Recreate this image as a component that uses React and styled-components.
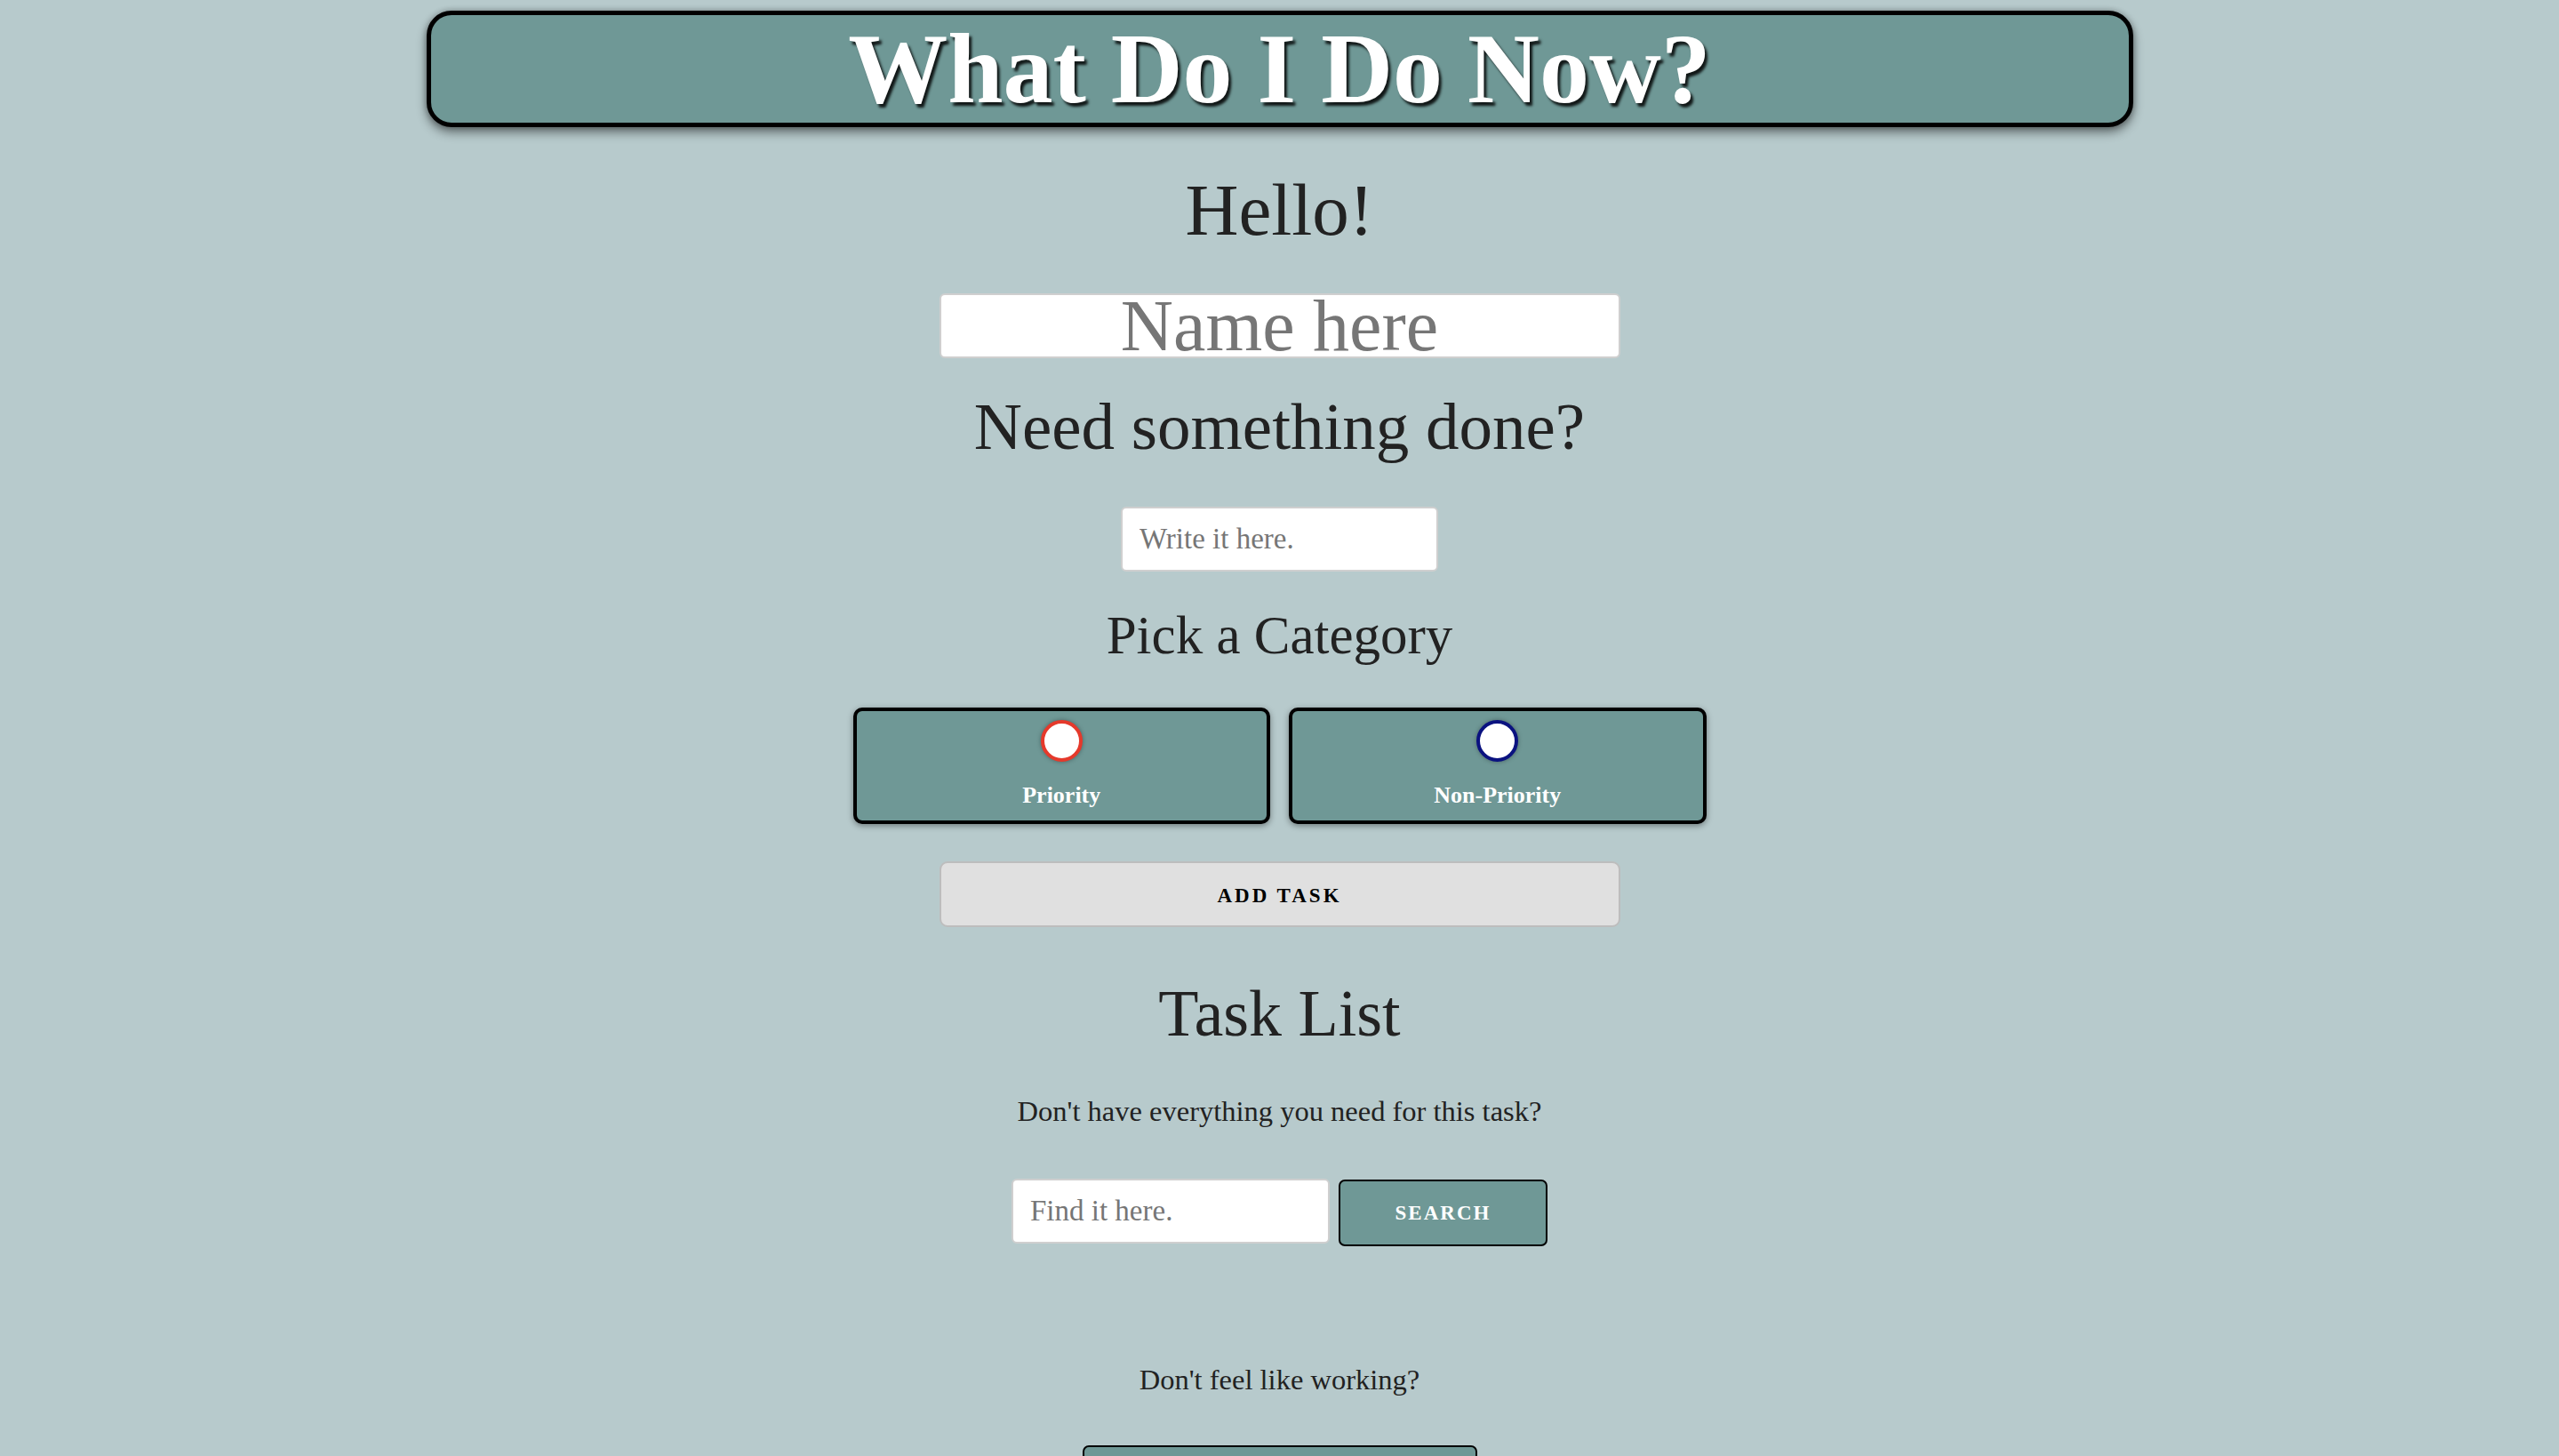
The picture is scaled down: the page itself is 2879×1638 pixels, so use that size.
import React from "react";
import styled, { createGlobalStyle } from "styled-components";

const GlobalStyle = createGlobalStyle`
  html, body {
    margin: 0;
    padding: 0;
    background: #b7cacc;
  }
  body {
    font-family: "Liberation Serif", "Times New Roman", serif;
    color: #222;
  }
  * { box-sizing: border-box; }
`;

const Page = styled.div`
  display: flex;
  flex-direction: column;
  align-items: center;
  min-height: 100vh;
  padding-top: 12px;
  padding-bottom: 40px;
`;

const Banner = styled.header`
  width: 1920px;
  height: 131px;
  background: #6f9896;
  border: 5px solid #000;
  border-radius: 28px;
  box-shadow: 0 6px 12px rgba(0, 0, 0, 0.45), 0 0 6px rgba(0, 0, 0, 0.3);
  display: flex;
  justify-content: center;
  align-items: flex-start;
  padding-top: 4px;
`;

const Title = styled.h1`
  margin: 0;
  font-size: 112px;
  line-height: 1;
  font-weight: 700;
  color: #fff;
  text-shadow: 3px 4px 3px rgba(0, 0, 0, 0.85);
`;

const Heading = styled.h2`
  margin: ${(p) => p.$mt}px 0 0;
  font-size: ${(p) => p.$size}px;
  line-height: 1;
  font-weight: 400;
  color: #222;
  text-align: center;
`;

const Text = styled.p`
  margin: ${(p) => p.$mt}px 0 0;
  font-size: 32.5px;
  line-height: 1;
  color: #222;
  text-align: center;
`;

const TextInput = styled.input`
  margin-top: ${(p) => p.$mt || 0}px;
  width: ${(p) => p.$w}px;
  height: 73px;
  background: #fff;
  border: 2px solid #cfcfcf;
  border-radius: 6px;
  font-family: inherit;
  font-size: ${(p) => p.$fs}px;
  text-align: ${(p) => (p.$center ? "center" : "left")};
  padding: 0 ${(p) => (p.$center ? 0 : 19)}px;
  color: #222;
  outline: none;
  &::placeholder {
    color: #767676;
  }
`;

const CategoryRow = styled.div`
  margin-top: 51px;
  width: 960px;
  display: grid;
  grid-template-columns: 1fr 1fr;
  column-gap: 21px;
`;

const CategoryCard = styled.label`
  height: 131px;
  background: #6f9896;
  border: 4px solid #000;
  border-radius: 10px;
  box-shadow: 0 2px 7px rgba(0, 0, 0, 0.4);
  display: flex;
  flex-direction: column;
  align-items: center;
  padding-top: 10px;
  cursor: pointer;
`;

const Bubble = styled.input.attrs({ type: "radio" })`
  appearance: none;
  margin: 0;
  width: 47px;
  height: 47px;
  border-radius: 50%;
  background: #fff;
  border: 4px solid ${(p) => p.$ring};
  box-shadow: 0 0 5px rgba(0, 0, 0, 0.35);
  cursor: pointer;
`;

const CardLabel = styled.span`
  margin-top: 25px;
  font-size: 26px;
  line-height: 1;
  font-weight: 700;
  color: #fff;
`;

const AddButton = styled.button`
  margin-top: 42px;
  width: 766px;
  height: 74px;
  background: #e0e0e0;
  border: 2px solid #bdbdbd;
  border-radius: 9px;
  font-family: inherit;
  font-size: 23px;
  font-weight: 700;
  letter-spacing: 3px;
  color: #000;
  padding-top: 4px;
  cursor: pointer;
`;

const SearchRow = styled.div`
  margin-top: 59px;
  display: flex;
  align-items: flex-start;
  gap: 10px;
`;

const TealButton = styled.button`
  margin-top: ${(p) => p.$mt || 0}px;
  width: ${(p) => p.$w}px;
  height: 75px;
  background: #6f9896;
  border: 2px solid #000;
  border-radius: 7px;
  font-family: inherit;
  font-size: 23px;
  font-weight: 700;
  letter-spacing: 2px;
  color: #fff;
  padding-top: 3px;
  cursor: pointer;
`;

export default function App() {
  return (
    <>
      <GlobalStyle />
      <Page>
        <Banner>
          <Title>What Do I Do Now?</Title>
        </Banner>
        <Heading $mt={52} $size={83}>Hello!</Heading>
        <TextInput $mt={52} $w={766} $fs={82} $center placeholder="Name here" />
        <Heading $mt={39} $size={75}>Need something done?</Heading>
        <TextInput $mt={53} $w={357} $fs={33} placeholder="Write it here." />
        <Heading $mt={41} $size={61}>Pick a Category</Heading>
        <CategoryRow>
          <CategoryCard>
            <Bubble name="category" $ring="#e5392b" />
            <CardLabel>Priority</CardLabel>
          </CategoryCard>
          <CategoryCard>
            <Bubble name="category" $ring="#0a1280" />
            <CardLabel>Non-Priority</CardLabel>
          </CategoryCard>
        </CategoryRow>
        <AddButton>ADD TASK</AddButton>
        <Heading $mt={60} $size={74}>Task List</Heading>
        <Text $mt={57}>Don't have everything you need for this task?</Text>
        <SearchRow>
          <TextInput $w={358} $fs={33} placeholder="Find it here." />
          <TealButton $mt={1} $w={235}>SEARCH</TealButton>
        </SearchRow>
        <Text $mt={134}>Don't feel like working?</Text>
        <TealButton $mt={58} $w={444} aria-label="Take a break" />
      </Page>
    </>
  );
}
